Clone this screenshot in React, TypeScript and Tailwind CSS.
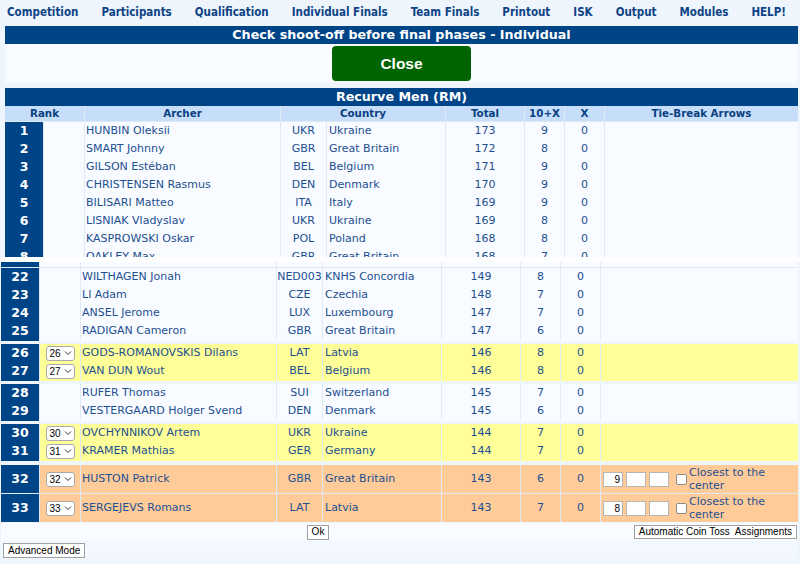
import React from "react";

type Row = {
  rank: number;
  name: string;
  code: string;
  country: string;
  total: number;
  tenx: number;
  x: number;
  sel?: boolean;
  tone?: "yellow" | "orange";
  tie?: string;
};

const menu = [
  "Competition",
  "Participants",
  "Qualification",
  "Individual Finals",
  "Team Finals",
  "Printout",
  "ISK",
  "Output",
  "Modules",
  "HELP!",
];

const topRows: Row[] = [
  { rank: 1, name: "HUNBIN Oleksii", code: "UKR", country: "Ukraine", total: 173, tenx: 9, x: 0 },
  { rank: 2, name: "SMART Johnny", code: "GBR", country: "Great Britain", total: 172, tenx: 8, x: 0 },
  { rank: 3, name: "GILSON Estéban", code: "BEL", country: "Belgium", total: 171, tenx: 9, x: 0 },
  { rank: 4, name: "CHRISTENSEN Rasmus", code: "DEN", country: "Denmark", total: 170, tenx: 9, x: 0 },
  { rank: 5, name: "BILISARI Matteo", code: "ITA", country: "Italy", total: 169, tenx: 9, x: 0 },
  { rank: 6, name: "LISNIAK Vladyslav", code: "UKR", country: "Ukraine", total: 169, tenx: 8, x: 0 },
  { rank: 7, name: "KASPROWSKI Oskar", code: "POL", country: "Poland", total: 168, tenx: 8, x: 0 },
  { rank: 8, name: "OAKLEY Max", code: "GBR", country: "Great Britain", total: 168, tenx: 7, x: 0 },
];

const groups: Row[][] = [
  [
    { rank: 22, name: "WILTHAGEN Jonah", code: "NED003", country: "KNHS Concordia", total: 149, tenx: 8, x: 0 },
    { rank: 23, name: "LI Adam", code: "CZE", country: "Czechia", total: 148, tenx: 7, x: 0 },
    { rank: 24, name: "ANSEL Jerome", code: "LUX", country: "Luxembourg", total: 147, tenx: 7, x: 0 },
    { rank: 25, name: "RADIGAN Cameron", code: "GBR", country: "Great Britain", total: 147, tenx: 6, x: 0 },
  ],
  [
    { rank: 26, name: "GODS-ROMANOVSKIS Dilans", code: "LAT", country: "Latvia", total: 146, tenx: 8, x: 0, sel: true, tone: "yellow" },
    { rank: 27, name: "VAN DUN Wout", code: "BEL", country: "Belgium", total: 146, tenx: 8, x: 0, sel: true, tone: "yellow" },
  ],
  [
    { rank: 28, name: "RUFER Thomas", code: "SUI", country: "Switzerland", total: 145, tenx: 7, x: 0 },
    { rank: 29, name: "VESTERGAARD Holger Svend", code: "DEN", country: "Denmark", total: 145, tenx: 6, x: 0 },
  ],
  [
    { rank: 30, name: "OVCHYNNIKOV Artem", code: "UKR", country: "Ukraine", total: 144, tenx: 7, x: 0, sel: true, tone: "yellow" },
    { rank: 31, name: "KRAMER Mathias", code: "GER", country: "Germany", total: 144, tenx: 7, x: 0, sel: true, tone: "yellow" },
  ],
  [
    { rank: 32, name: "HUSTON Patrick", code: "GBR", country: "Great Britain", total: 143, tenx: 6, x: 0, sel: true, tone: "orange", tie: "9" },
    { rank: 33, name: "SERGEJEVS Romans", code: "LAT", country: "Latvia", total: 143, tenx: 7, x: 0, sel: true, tone: "orange", tie: "8" },
  ],
];

// gap above each group after the first
const groupGap = ["mt-[5px]", "mt-[5px]", "mt-[5px]", "mt-[6px]"];

const cols = "grid grid-cols-[38px_40px_195px_45px_118px_78px_39px_39px_1fr] gap-x-px";

function FakeSelect({ value }: { value: number }) {
  return (
    <div className="flex h-[15px] w-[29px] items-center justify-between rounded-[3px] border border-[#a9a9a9] bg-white pl-[3px] pr-[2px] font-['Liberation_Sans',sans-serif] text-[10px] text-black">
      <span>{value}</span>
      <svg width="8" height="6" viewBox="0 0 8 6" aria-hidden>
        <path d="M1 1.5 L4 4.5 L7 1.5" fill="none" stroke="#333" strokeWidth="1" />
      </svg>
    </div>
  );
}

function TieInputs({ first }: { first: string }) {
  return (
    <div className="flex items-center pl-[2px]">
      <input
        readOnly
        value={first}
        className="h-[15px] w-[20px] border border-[#b5b5b5] bg-white pr-[2px] text-right font-['Liberation_Sans',sans-serif] text-[10px] text-black outline-none"
      />
      <input readOnly className="ml-[3px] h-[15px] w-[20px] border border-[#b5b5b5] bg-white outline-none" />
      <input readOnly className="ml-[3px] h-[15px] w-[20px] border border-[#b5b5b5] bg-white outline-none" />
      <input
        type="checkbox"
        className="ml-[7px] h-[11px] w-[11px] appearance-none rounded-[2px] border border-[#8a8a8a] bg-white"
      />
      <span className="ml-[2px] text-[11px] leading-[13px] text-[#1d4f91]">
        Closest to the
        <br />
        center
      </span>
    </div>
  );
}

function DataRow({ r }: { r: Row }) {
  const bg =
    r.tone === "yellow" ? "bg-[#ffff99]" : r.tone === "orange" ? "bg-[#ffcc99]" : "bg-[#f8fbff]";
  const h = r.tie ? "h-[28px]" : "h-[17px]";
  return (
    <div className={`${cols} ${h} text-[11px] text-[#1d4f91]`}>
      <div className="flex items-center justify-center bg-[#004488] text-[12.5px] font-bold text-white">
        {r.rank}
      </div>
      <div className={`${bg} flex items-center justify-center`}>
        {r.sel && <FakeSelect value={r.rank} />}
      </div>
      <div className={`${bg} flex items-center pl-[1px] whitespace-nowrap`}>{r.name}</div>
      <div className={`${bg} flex items-center justify-center`}>{r.code}</div>
      <div className={`${bg} flex items-center pl-[2px] whitespace-nowrap`}>{r.country}</div>
      <div className={`${bg} flex items-center justify-center`}>{r.total}</div>
      <div className={`${bg} flex items-center justify-center`}>{r.tenx}</div>
      <div className={`${bg} flex items-center justify-center`}>{r.x}</div>
      <div className={`${bg} flex items-center`}>{r.tie && <TieInputs first={r.tie} />}</div>
    </div>
  );
}

function Strip() {
  return (
    <div className={`${cols} h-[5px]`}>
      <div className="bg-[#004488]" />
      {Array.from({ length: 8 }).map((_, i) => (
        <div key={i} className="bg-[#f8fbff]" />
      ))}
    </div>
  );
}

export default function App() {
  return (
    <div className="h-[564px] w-[800px] overflow-hidden bg-[#eef5fd] font-['DejaVu_Sans',sans-serif]">
      <nav className="flex h-[26px] items-center gap-[23px] pl-[7px] font-['DejaVu_Sans_Condensed','DejaVu_Sans',sans-serif] text-[11.5px] font-bold text-[#0d4385]">
        {menu.map((m) => (
          <span key={m} className="whitespace-nowrap">
            {m}
          </span>
        ))}
      </nav>

      <div className="ml-[5px] mr-[2px]">
        <div className="flex h-[18px] items-center justify-center bg-[#004488] text-[12.7px] font-bold text-white">
          Check shoot-off before final phases - Individual
        </div>
        <div className="flex h-[39px] items-center justify-center bg-[#f8fbff]">
          <button className="h-[35px] w-[139px] rounded-[4px] bg-[#006400] font-['Liberation_Sans',sans-serif] text-[15.5px] font-bold text-white">
            Close
          </button>
        </div>
        <div className="mt-[5px] flex h-[18px] items-center justify-center bg-[#004488] text-[12.7px] font-bold text-white">
          Recurve Men (RM)
        </div>
        <div className="flex h-[151px] flex-col gap-y-px overflow-hidden bg-[#dfeaf7]">
          <div className={`${cols} h-[15px] shrink-0 text-[10.3px] font-bold text-[#0b3f80]`}>
            <div className="col-span-2 flex items-center justify-center bg-[#c6defa]">Rank</div>
            <div className="flex items-center justify-center bg-[#c6defa]">Archer</div>
            <div className="col-span-2 flex items-center justify-center bg-[#c6defa]">Country</div>
            <div className="flex items-center justify-center bg-[#c6defa]">Total</div>
            <div className="flex items-center justify-center bg-[#c6defa]">10+X</div>
            <div className="flex items-center justify-center bg-[#c6defa]">X</div>
            <div className="flex items-center justify-center bg-[#c6defa]">Tie-Break Arrows</div>
          </div>
          {topRows.map((r) => (
            <div key={r.rank} className="shrink-0">
              <DataRow r={r} />
            </div>
          ))}
        </div>
      </div>

      <div className="h-[5px] bg-white" />

      <div className="ml-[1px] mr-[2px]">
        <div className="flex flex-col gap-y-px bg-[#dfeaf7]">
          <Strip />
          {groups[0].map((r) => (
            <DataRow key={r.rank} r={r} />
          ))}
        </div>
        {groups.slice(1).map((g, i) => (
          <div key={i} className={`${groupGap[i]} flex flex-col gap-y-px bg-[#dfeaf7]`}>
            {g.map((r) => (
              <DataRow key={r.rank} r={r} />
            ))}
          </div>
        ))}
        <div className="mt-px flex h-[18px] items-center bg-[#f8fbff]">
          <div className="flex w-[634px] shrink-0 justify-center">
            <button className="h-[15px] border border-[#a0a0a0] bg-white px-[4px] font-['Liberation_Sans',sans-serif] text-[10px] leading-none text-black">
              Ok
            </button>
          </div>
          <div className="flex min-w-0 flex-1 justify-end pr-[1px]">
            <button className="h-[14px] border border-[#a0a0a0] bg-white px-[4px] font-['Liberation_Sans',sans-serif] text-[10px] leading-none whitespace-pre text-black">
              Automatic Coin Toss  Assignments
            </button>
          </div>
        </div>
        <div className="mt-px flex h-[17px] items-center bg-[#f3f8fe] pl-[2px]">
          <button className="h-[15px] border border-[#a0a0a0] bg-white px-[4px] font-['Liberation_Sans',sans-serif] text-[10px] leading-none text-black">
            Advanced Mode
          </button>
        </div>
      </div>
    </div>
  );
}
